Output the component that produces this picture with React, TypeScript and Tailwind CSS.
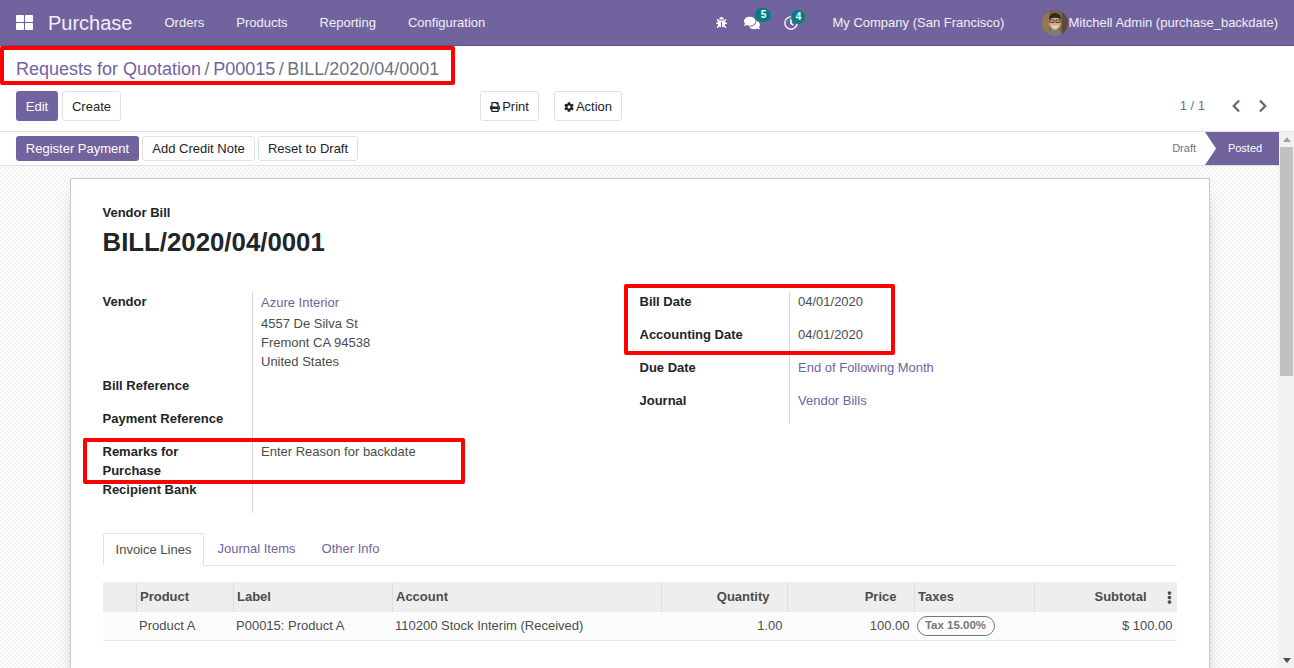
import React from 'react';
import { FaBug, FaChevronLeft, FaChevronRight, FaCog, FaComments, FaEllipsisV, FaPrint, FaRegClock, FaThLarge } from 'react-icons/fa';

const Field = ({ label, children, className = 'pb-[14px]', labelClass = '' }: { label: React.ReactNode; children?: React.ReactNode; className?: string; labelClass?: string }) => (
  <div className="flex">
    <div className={`w-[149px] shrink-0 font-bold text-[#212529] leading-[19px] ${className} ${labelClass}`}>{label}</div>
    <div className={`flex-1 border-l border-[#d8d8d8] pl-[8.5px] leading-[19px] text-[#4c4c4c] ${className}`}>{children}</div>
  </div>
);

const Avatar = () => (
  <svg viewBox="0 0 26 26" className="h-[26px] w-[26px] shrink-0 rounded-full">
    <rect width="26" height="26" fill="#7a6444" />
    <rect x="0" y="0" width="7" height="26" fill="#94794f" />
    <rect x="20" y="0" width="6" height="26" fill="#5a4c3a" />
    <path d="M6 26c0-5 3-7 7-7s7 2 7 7z" fill="#74807c" />
    <ellipse cx="13" cy="12.5" rx="6" ry="7.500" fill="#d9ac8c" />
    <path d="M7 10c0-5 3-7 6-7s6 2 6 7c-2-3-9-3-12 0z" fill="#33291f" />
    <rect x="8" y="10" width="4" height="2.500" fill="none" stroke="#2d2a28" strokeWidth=".8" />
    <rect x="14" y="10" width="4" height="2.500" fill="none" stroke="#2d2a28" strokeWidth=".8" />
    <path d="M10 16c2 1.500 4 1.500 6 0" fill="none" stroke="#fff" strokeWidth="1" />
  </svg>
);

const headCell = 'flex h-[30px] items-center border-l border-[#dedede] bg-[#eeeeee] px-[3.5px] font-bold text-[#4c4c4c]';
const rowCell = 'flex h-[29px] items-center border-b border-[#e6e6e6] bg-[#fcfcfc]';

export default function App() {
  return (
    <div className="relative h-[668px] w-[1294px] overflow-hidden bg-white font-['Liberation_Sans',Arial,sans-serif] text-[13px] text-[#4c4c4c]">
      {/* Top navbar */}
      <nav className="flex h-[46px] items-center border-b border-[#5f5488] bg-[#71639e] text-white/90">
        <FaThLarge className="ml-4 text-[17px] text-white" />
        <span className="ml-[15px] text-[20px] leading-none">Purchase</span>
        <div className="ml-[32px] flex gap-[32px] pt-px">
          <span>Orders</span>
          <span>Products</span>
          <span>Reporting</span>
          <span>Configuration</span>
        </div>
        <div className="ml-auto flex items-center pr-[16px]">
          <FaBug className="text-[11px] text-white" />
          <div className="relative ml-[17px]">
            <FaComments className="text-[16px] text-white" />
            <span className="absolute -right-[11px] -top-[7px] flex h-[14px] w-[16px] items-center justify-center rounded-full bg-[#017e84] text-[10px] font-bold text-white">5</span>
          </div>
          <div className="relative ml-[24px]">
            <FaRegClock className="text-[14px] text-white" />
            <span className="absolute -right-[7px] -top-[6px] flex h-[14px] w-[14px] items-center justify-center rounded-full bg-[#017e84] text-[10px] font-bold text-white">4</span>
          </div>
          <span className="ml-[34px] pt-px">My Company (San Francisco)</span>
          <div className="ml-[38px]"><Avatar /></div>
          <span className="pt-px">Mitchell Admin (purchase_backdate)</span>
        </div>
      </nav>

      {/* Control panel */}
      <div className="h-[86px] border-b border-[#dee2e6] px-4">
        <div className="flex h-[45px] items-center text-[18px] leading-none">
          <span className="text-[#71639e]">Requests for Quotation</span>
          <span className="mx-[3.5px] text-[#6c757d]">/</span>
          <span className="text-[#71639e]">P00015</span>
          <span className="mx-[3.5px] text-[#6c757d]">/</span>
          <span className="text-[#6c757d]">BILL/2020/04/0001</span>
        </div>
        <div className="flex h-[30px] items-center">
          <div className="flex w-[464px] gap-1">
            <button className="h-[30px] w-[42px] rounded-[3px] bg-[#71639e] pt-px text-white">Edit</button>
            <button className="h-[30px] w-[59px] rounded-[3px] border border-[#dee2e6] pt-px text-[#212529]">Create</button>
          </div>
          <button className="flex h-[30px] w-[59px] items-center justify-center gap-[2px] rounded-[3px] border border-[#dee2e6] pt-px text-[#212529]">
            <FaPrint className="text-[10px]" />Print
          </button>
          <button className="ml-[15px] flex h-[30px] w-[68px] items-center justify-center gap-[2px] rounded-[3px] border border-[#dee2e6] pt-px text-[#212529]">
            <FaCog className="text-[10px]" />Action
          </button>
          <span className="ml-auto text-[#6c757d]">1 / 1</span>
          <FaChevronLeft className="ml-[24px] text-[14px] text-[#5f6a73]" />
          <FaChevronRight className="ml-[13px] mr-[8px] text-[14px] text-[#5f6a73]" />
        </div>
      </div>

      <div className="flex h-[536px]">
        <div className="flex w-[1279px] flex-col">
          {/* Status bar */}
          <div className="flex h-[34px] shrink-0 items-center border-b border-[#dee2e6] pl-4">
            <div className="flex gap-[3px]">
              <button className="h-[25px] w-[123px] rounded-[3px] bg-[#71639e] text-white">Register Payment</button>
              <button className="h-[25px] w-[113px] rounded-[3px] border border-[#dee2e6] text-[#212529]">Add Credit Note</button>
              <button className="h-[25px] w-[100px] rounded-[3px] border border-[#dee2e6] text-[#212529]">Reset to Draft</button>
            </div>
            <span className="ml-auto mr-[9px] text-[11px] text-[#6c757d]">Draft</span>
            <span className="flex h-[33px] w-[74px] items-center justify-center bg-[#71639e] pl-[6px] text-[11px] text-white [clip-path:polygon(0_0,100%_0,100%_100%,0_100%,11px_50%)]">Posted</span>
          </div>

          {/* Sheet area */}
          <div className="flex-1 overflow-hidden bg-[repeating-conic-gradient(#f3f3f3_0_25%,#fdfdfd_0_50%)] bg-[length:4px_4px] pt-[12px]">
            <div className="mx-auto h-[600px] w-[1140px] border border-[#c8c8d4] bg-white px-8 pt-[24px] shadow-[0_5px_20px_-15px_black]">
              <div className="font-bold leading-[19px] text-[#212529]">Vendor Bill</div>
              <h1 className="mt-[5px] text-[25.8px] font-bold leading-[30px] text-[#212529]">BILL/2020/04/0001</h1>

              <div className="mt-[35px] flex">
                <div className="w-[537px]">
                  <Field label="Vendor" className="pb-[5px]">
                    <div className="pt-px text-[#71639e]">Azure Interior</div>
                    <div className="mt-[2px]">4557 De Silva St</div>
                    <div>Fremont CA 94538</div>
                    <div>United States</div>
                  </Field>
                  <Field label="Bill Reference" />
                  <Field label="Payment Reference" />
                  <Field label={<>Remarks for<br />Purchase</>} className="pb-0">Enter Reason for backdate</Field>
                  <Field label="Recipient Bank" />
                </div>
                <div className="w-[537px]">
                  <Field label="Bill Date">04/01/2020</Field>
                  <Field label="Accounting Date">04/01/2020</Field>
                  <Field label="Due Date"><span className="text-[#71639e]">End of Following Month</span></Field>
                  <Field label="Journal"><span className="text-[#71639e]">Vendor Bills</span></Field>
                </div>
              </div>

              {/* Tabs */}
              <div className="mt-[20px] flex h-[33px] border-b border-[#dee2e6]">
                <span className="flex h-[33px] w-[101px] items-center justify-center rounded-t-[3px] border border-b-0 border-[#dee2e6] bg-white pl-px text-[#4c4c4c]">Invoice Lines</span>
                <span className="flex h-[32px] items-center pl-[14px] text-[#71639e]">Journal Items</span>
                <span className="flex h-[32px] items-center pl-[26px] text-[#71639e]">Other Info</span>
              </div>

              {/* Invoice lines table */}
              <div className="mt-[16px] grid grid-cols-[33px_97px_159px_269px_126px_127px_120px_143px]">
                <div className="h-[30px] bg-[#eeeeee]" />
                <div className={headCell}>Product</div>
                <div className={headCell}>Label</div>
                <div className={headCell}>Account</div>
                <div className={`${headCell} justify-end pr-[17px]`}>Quantity</div>
                <div className={`${headCell} justify-end pr-[17px]`}>Price</div>
                <div className={headCell}>Taxes</div>
                <div className={`${headCell} justify-end pr-[1px]`}>
                  Subtotal
                  <FaEllipsisV className="ml-[16px] text-[13px]" />
                </div>

                <div className={rowCell} />
                <div className={`${rowCell} px-[3.5px]`}>Product A</div>
                <div className={`${rowCell} px-[3.5px]`}>P00015: Product A</div>
                <div className={`${rowCell} px-[3.5px]`}>110200 Stock Interim (Received)</div>
                <div className={`${rowCell} justify-end px-[4px]`}>1.00</div>
                <div className={`${rowCell} justify-end px-[4px]`}>100.00</div>
                <div className={`${rowCell} px-[3px]`}>
                  <span className="flex h-[20px] w-[78px] items-center justify-center rounded-full border border-[#777777] text-[11.5px] font-bold text-[#777777]">Tax 15.00%</span>
                </div>
                <div className={`${rowCell} justify-end px-[4px]`}>$ 100.00</div>
              </div>
            </div>
          </div>
        </div>

        {/* Scrollbar */}
        <div className="flex w-[15px] flex-col items-center bg-[#f1f1f1]">
          <div className="mt-[5px] h-0 w-0 border-x-[4px] border-b-[5px] border-x-transparent border-b-[#a3a3a3]" />
          <div className="mt-[5px] h-[229px] w-[13px] bg-[#c1c1c1]" />
          <div className="mt-auto mb-[5px] h-0 w-0 border-x-[4px] border-t-[5px] border-x-transparent border-t-[#505050]" />
        </div>
      </div>

      {/* Red annotation boxes */}
      <div className="absolute left-0 top-[46px] h-[39px] w-[455px] rounded-[2px] border-4 border-[#ff0000]" />
      <div className="absolute left-[83px] top-[438px] h-[46px] w-[382px] rounded-[2px] border-4 border-[#ff0000]" />
      <div className="absolute left-[624px] top-[284px] h-[71px] w-[271px] rounded-[2px] border-4 border-[#ff0000]" />
    </div>
  );
}
